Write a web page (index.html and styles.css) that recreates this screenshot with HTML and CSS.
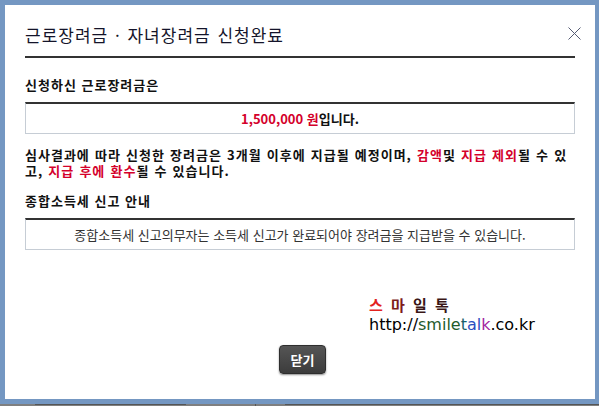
FILE: index.html
```
<!DOCTYPE html>
<html lang="ko">
<head>
    <meta charset="UTF-8">
    <title>근로장려금 · 자녀장려금 신청완료</title>
    <link rel="stylesheet" href="styles.css">
</head>
<body>
    <div class="frame">
        <div class="dialog">
            <div class="dialog-head">
                <h1>근로장려금 · 자녀장려금 신청완료</h1>
                <button class="close" title="닫기">
                    <svg width="13" height="13" viewBox="0 0 13 13">
                        <path d="M0.5 0.5 L12.5 12.5 M12.5 0.5 L0.5 12.5" stroke="#555b73" stroke-width="1" fill="none"/>
                    </svg>
                </button>
            </div>

            <h2>신청하신 근로장려금은</h2>
            <div class="result-box strong">
                <span class="red">1,500,000 원</span>입니다.
            </div>

            <p class="notice">
                심사결과에 따라 신청한 장려금은 3개월 이후에 지급될 예정이며, <span class="red">감액</span>및 <span class="red">지급 제외</span>될 수 있고, <span class="red">지급 후에 환수</span>될 수 있습니다.
            </p>

            <h2>종합소득세 신고 안내</h2>
            <div class="result-box">
                종합소득세 신고의무자는 소득세 신고가 완료되어야 장려금을 지급받을 수 있습니다.
            </div>

            <div class="dialog-foot">
                <button class="btn-close">닫기</button>
            </div>

            <div class="watermark">
                <div class="wm-name"><span class="c1">스</span> <span class="c2">마</span> <span class="c3">일</span> <span class="c3">톡</span></div>
                <div class="wm-url">http://<span class="g">smile</span><span class="t">t</span><span class="b">al</span><span class="p">k</span>.co.kr</div>
            </div>
        </div>
    </div>
    <div class="taskbar">
        <span class="tb-seg one"></span>
        <span class="tb-seg two"></span>
        <span class="tb-seg three"></span>
    </div>
</body>
</html>
```

FILE: styles.css
```
html, body {
    margin: 0;
    padding: 0;
}
body {
    width: 599px;
    height: 406px;
    overflow: hidden;
    background-color: #7497c2;
    font-family: "Noto Sans CJK KR", "Noto Sans", sans-serif;
    color: #111;
}
.frame {
    padding: 5px 4px 5px 5px;
}
.dialog {
    position: relative;
    height: 394px;
    background-color: #fff;
    padding: 0 20px;
    box-sizing: border-box;
}
.dialog-head {
    padding-top: 17px;
    padding-bottom: 8px;
    border-bottom: 2px solid #333;
}
h1 {
    margin: 0;
    font-size: 17px;
    line-height: 26px;
    font-weight: normal;
    color: #14142a;
    letter-spacing: 1px;
    word-spacing: 1px;
}
.close {
    position: absolute;
    top: 22px;
    right: 14px;
    width: 13px;
    height: 13px;
    padding: 0;
    border: none;
    background: none;
    cursor: pointer;
}
.close svg {
    display: block;
}
h2 {
    margin: 18px 0 8px;
    font-size: 13px;
    line-height: 18px;
    font-weight: bold;
    color: #111;
    letter-spacing: 1px;
}
.result-box {
    border: 1px solid #c6cdd5;
    border-top: 2px solid #333;
    height: 29px;
    line-height: 29px;
    text-align: center;
    font-size: 13px;
    color: #333;
}
.result-box.strong {
    font-weight: bold;
    color: #111;
}
.red {
    color: #d4002b;
}
.notice {
    margin: 13px 0 0;
    font-size: 13px;
    line-height: 16px;
    font-weight: bold;
    letter-spacing: 1px;
    word-spacing: 0.5px;
}
.notice + h2 {
    margin-top: 13px;
}
.dialog-foot {
    margin-top: 95px;
    text-align: center;
    padding-left: 5px;
}
.btn-close {
    width: 47px;
    height: 29px;
    padding: 0;
    border: 1px solid #2e2e2e;
    border-radius: 4px;
    background: linear-gradient(#555, #3c3c3c);
    box-shadow: 0 1px 2px rgba(0,0,0,0.45);
    color: #fff;
    font-family: "Noto Sans CJK KR", sans-serif;
    font-size: 13px;
    font-weight: bold;
    cursor: pointer;
}
.watermark {
    position: absolute;
    left: 364px;
    top: 290px;
}
.wm-name {
    font-size: 15px;
    line-height: 20px;
    font-weight: bold;
    word-spacing: 4px;
}
.wm-name .c1 { color: #e2231f; }
.wm-name .c2 { color: #7d1c1c; }
.wm-name .c3 { color: #3a1616; }
.wm-url {
    font-family: "DejaVu Sans", sans-serif;
    font-size: 16px;
    line-height: 20px;
    color: #000;
}
.wm-url .g { color: #1f5b2c; }
.wm-url .t { color: #19606b; }
.wm-url .b { color: #2a4fc0; }
.wm-url .p { color: #a3259f; }
.taskbar {
    position: relative;
    height: 2px;
    background-color: #7f7f7f;
}
.tb-seg {
    position: absolute;
    top: 0;
    height: 1px;
    background-color: #555;
}
.tb-seg.one { left: 35px; width: 151px; }
.tb-seg.two { left: 255px; width: 1px; height: 2px; }
.tb-seg.three { left: 285px; width: 314px; }
```
